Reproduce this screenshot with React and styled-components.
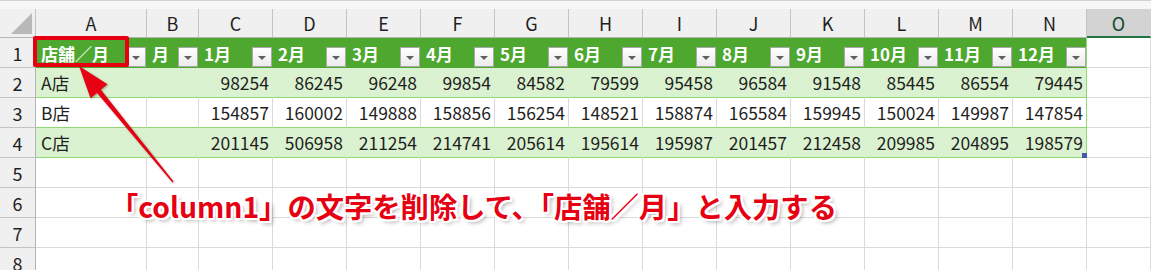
import styled, { createGlobalStyle } from 'styled-components'

const GlobalStyle = createGlobalStyle`
    html, body {
        margin: 0;
        padding: 0;
        background: #ffffff;
    }
    body {
        font-family: "Noto Sans CJK JP", "Noto Sans", sans-serif;
    }
`

const Colors = {
    head: '#4ea72e',
    band: '#daf2d0',
    line: '#8ed973',
    grid: '#dadada',
    chrome: '#f0f0f0',
    chromeLine: '#c4c4c4',
    red: '#e60012',
    text: '#1f1f1f',
}

const COLUMNS = ['A', 'B', 'C', 'D', 'E', 'F', 'G', 'H', 'I', 'J', 'K', 'L', 'M', 'N', 'O']
const MONTHS = Array.from({ length: 12 }, (_, i) => `${i + 1}月`)
const HEADERS = ['店舗／月', '月', ...MONTHS]

const ROWS = [
    { name: 'A店', values: [98254, 86245, 96248, 99854, 84582, 79599, 95458, 96584, 91548, 85445, 86554, 79445] },
    { name: 'B店', values: [154857, 160002, 149888, 158856, 156254, 148521, 158874, 165584, 159945, 150024, 149987, 147854] },
    { name: 'C店', values: [201145, 506958, 211254, 214741, 205614, 195614, 195987, 201457, 212458, 209985, 204895, 198579] },
]

export default function App() {
    return (
        <>
            <GlobalStyle />
            <Window>
                <TopStrip />
                <Sheet>
                    <Corner><CornerMark /></Corner>
                    {COLUMNS.map(c => (
                        <ColHead key={c} $selected={c === 'O'}>{c}</ColHead>
                    ))}

                    <RowHead>1</RowHead>
                    {HEADERS.map((h, i) => (
                        <HeadCell key={h} $last={i === HEADERS.length - 1}>
                            <HeadLabel>{h}</HeadLabel>
                            <FilterButton><FilterArrow /></FilterButton>
                        </HeadCell>
                    ))}
                    <GridCell />

                    {ROWS.map((row, r) => (
                        <Row key={row.name} index={r + 2} row={row} band={r % 2 === 0} lastRow={r === ROWS.length - 1} />
                    ))}

                    {[5, 6, 7, 8].map(n => (
                        <EmptyRow key={n} index={n} />
                    ))}
                </Sheet>

                <Highlight />
                <Arrow viewBox="0 0 1151 270">
                    <polygon
                        points="79,66 107.5,84.3 100.9,89.7 173.6,181.5 172.4,182.5 97.1,92.9 90.5,98.2"
                        fill={Colors.red}
                    />
                </Arrow>
                <Note>「column1」の文字を削除して、「店舗／月」と入力する</Note>
            </Window>
        </>
    )
}

const Row = ({ index, row, band, lastRow }) => (
    <>
        <RowHead>{index}</RowHead>
        <DataCell $band={band}>{row.name}</DataCell>
        <DataCell $band={band} />
        {row.values.map((v, i) => (
            <DataCell key={i} $band={band} $num $last={i === row.values.length - 1}>
                {v}
                {lastRow && i === row.values.length - 1 && <ResizeHandle />}
            </DataCell>
        ))}
        <GridCell />
    </>
)

const EmptyRow = ({ index }) => (
    <>
        <RowHead>{index}</RowHead>
        {COLUMNS.map(c => <GridCell key={c} />)}
    </>
)

const Window = styled.div`
    position: relative;
    width: 1151px;
    height: 270px;
    overflow: hidden;
    background: #ffffff;
`

const TopStrip = styled.div`
    height: 8px;
    background: #f7f7f7;
    border-top: 1px solid #d2d2d2;
`

const Sheet = styled.div`
    display: grid;
    grid-template-columns: 36px 111px 52px repeat(12, 74px) 1fr;
    grid-template-rows: 29px;
    grid-auto-rows: 30px;
    color: ${Colors.text};
`

const Corner = styled.div`
    position: relative;
    background: ${Colors.chrome};
    border-right: 1px solid ${Colors.chromeLine};
    border-bottom: 1px solid #b4b4b4;
`

const CornerMark = styled.div`
    position: absolute;
    right: 3px;
    bottom: 3px;
    width: 21px;
    height: 21px;
    background: #b9b9b9;
    clip-path: polygon(100% 0, 100% 100%, 0 100%);
`

const ColHead = styled.div`
    display: flex;
    align-items: center;
    justify-content: center;
    background: ${p => p.$selected ? '#d3d3d3' : Colors.chrome};
    border-right: 1px solid ${p => p.$selected ? '#d3d3d3' : Colors.chromeLine};
    border-bottom: ${p => p.$selected ? '2px solid #217346' : '1px solid #b4b4b4'};
    color: ${p => p.$selected ? '#0f4a2a' : Colors.text};
    font-size: 18px;
    box-sizing: border-box;
    padding-top: ${p => p.$selected ? '1px' : '0'};
`

const RowHead = styled.div`
    display: flex;
    align-items: center;
    justify-content: center;
    background: ${Colors.chrome};
    border-right: 1px solid #b4b4b4;
    border-bottom: 1px solid ${Colors.chromeLine};
    font-size: 18px;
`

const GridCell = styled.div`
    border-right: 1px solid ${Colors.grid};
    border-bottom: 1px solid ${Colors.grid};
`

const HeadCell = styled.div`
    display: flex;
    align-items: center;
    justify-content: space-between;
    min-width: 0;
    background: ${Colors.head};
    border-right: 1px solid ${p => p.$last ? Colors.line : Colors.head};
    padding-left: 5px;
`

const HeadLabel = styled.span`
    color: #ffffff;
    font-size: 17px;
    font-weight: 700;
    white-space: nowrap;
    overflow: hidden;
`

const FilterButton = styled.div`
    flex: none;
    align-self: flex-end;
    display: flex;
    align-items: center;
    justify-content: center;
    width: 20px;
    height: 20px;
    margin: 0 0 1px 0;
    box-sizing: border-box;
    border: 1px solid #a9a9a9;
    background: linear-gradient(#ffffff, #ebebeb);
`

const FilterArrow = styled.div`
    width: 0;
    height: 0;
    margin-top: 2px;
    border-left: 4px solid transparent;
    border-right: 4px solid transparent;
    border-top: 4px solid #606060;
`

const DataCell = styled.div`
    position: relative;
    display: flex;
    align-items: center;
    justify-content: ${p => p.$num ? 'flex-end' : 'flex-start'};
    padding: ${p => p.$num ? '0 3px 0 0' : '0 0 0 5px'};
    background: ${p => p.$band ? Colors.band : '#ffffff'};
    border-bottom: 1px solid ${Colors.line};
    border-right: 1px solid ${p => p.$last ? Colors.line : p.$band ? Colors.band : Colors.grid};
    font-size: 17.5px;
    white-space: nowrap;
`

const ResizeHandle = styled.div`
    position: absolute;
    right: -1px;
    bottom: -1px;
    width: 5px;
    height: 5px;
    background: #4657ae;
`

const Highlight = styled.div`
    position: absolute;
    left: 33px;
    top: 36px;
    width: 96px;
    height: 31px;
    box-sizing: border-box;
    border: 4px solid ${Colors.red};
    border-radius: 2px;
`

const Arrow = styled.svg`
    position: absolute;
    left: 0;
    top: 0;
    width: 1151px;
    height: 270px;
    pointer-events: none;
    filter: drop-shadow(1px 1px 1px rgba(0, 0, 0, 0.3));
`

const Note = styled.div`
    position: absolute;
    left: 110px;
    top: 190px;
    color: ${Colors.red};
    font-size: 28.3px;
    font-weight: 700;
    line-height: 32px;
    white-space: nowrap;
    text-shadow:
        -2px -2px 0 #fff, 2px -2px 0 #fff, -2px 2px 0 #fff, 2px 2px 0 #fff,
        0 -2px 0 #fff, 0 2px 0 #fff, -2px 0 0 #fff, 2px 0 0 #fff,
        3px 3px 4px rgba(0, 0, 0, 0.35);
`
